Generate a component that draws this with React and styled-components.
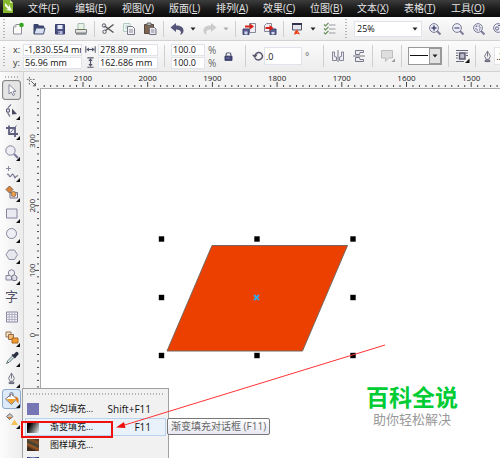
import React, { useState } from "react";
import styled, { createGlobalStyle, css } from "styled-components";

const GlobalStyle = createGlobalStyle`
  * {
    box-sizing: border-box;
  }

  body {
    margin: 0;
    overflow: hidden;
    background: #fff;
  }

  body, button, input, select {
    font-family: "Open Sans", "Noto Sans CJK SC", sans-serif;
    font-size: 9px;
    line-height: 12px;
    color: #111;
  }

  button, input, select {
    margin: 0;
    padding: 0;
    border: 0;
    background: transparent;
    outline: none;
  }
`;

const Window = styled.div`
  position: relative;
  display: flex;
  flex-direction: column;
  height: 100vh;
  overflow: hidden;
`;

const MenuBar = styled.nav`
  display: flex;
  flex: none;
  align-items: center;
  height: 17px;
  padding-left: 3px;
  overflow: hidden;
  background: linear-gradient(#3c3c3c, #1c1c1c 50%, #0a0a0a);
`;

const MenuItem = styled.button`
  flex: 0 0 47px;
  padding-bottom: 2px;
  font-size: 10px;
  line-height: 14px;
  text-align: left;
  white-space: nowrap;
  color: #e6e6e6;
`;

const Logo = styled.svg`
  flex: none;
  width: 11px;
  height: 17px;
  margin-right: 14px;
`;

const Toolbar = styled.div`
  display: flex;
  flex: none;
  align-items: center;
  height: ${(p) => p.$height};
  overflow: hidden;
  border-bottom: 1px solid #d2d2d2;
  background: linear-gradient(#fbfbfb, #ececec);
`;

const Grip = styled.span`
  flex: none;
  width: 2px;
  height: 19px;
  margin: 0 ${(p) => p.$gap || "2px"} 0 ${(p) => p.$before || "3px"};
  background: repeating-linear-gradient(#b4b4b4 0 1px, transparent 1px 3px);
`;

const Separator = styled.span`
  flex: none;
  width: 1px;
  height: 16px;
  margin: 0 ${(p) => p.$after || "2px"} 0 ${(p) => p.$before || "3px"};
  background: #cfcfcf;

  ${(p) =>
    p.$tall &&
    css`
      height: 22px;
    `}
`;

const ToolButton = styled.button`
  display: flex;
  flex: 0 0 ${(p) => p.$width || "21px"};
  align-items: center;
  justify-content: center;
  height: 20px;
`;

const Svg = styled.svg`
  display: block;
  flex: none;
  overflow: visible;
  fill: none;
  stroke: #55566a;
  stroke-width: 1;
`;

const Field = styled.input`
  width: ${(p) => p.$width};
  height: ${(p) => p.$height || "12px"};
  padding-left: 1px;
  border: 1px solid #e0e4ea;
  background: #fff;
`;

const Pair = styled.div`
  display: grid;
  flex: none;
  grid-template-columns: ${(p) => p.$columns};
  align-items: center;
  row-gap: 1px;
`;

const FieldLabel = styled.label`
  display: flex;
  justify-content: center;
  color: #333;
`;

const Unit = styled.span`
  padding-left: 3px;
  font-size: 10px;
  color: #666;
`;

const SelectBox = styled.div`
  position: relative;
  flex: 0 0 ${(p) => p.$width};
  height: ${(p) => p.$height};
  border: 1px solid ${(p) => p.$border || "#e0e4ea"};
  background: #fff;

  select {
    width: 100%;
    height: 100%;
    padding-left: 2px;
    appearance: none;
  }
`;

const SelectArrow = styled.span`
  position: absolute;
  top: 0;
  right: 0;
  bottom: 0;
  display: flex;
  align-items: center;
  justify-content: center;
  width: 12px;
  pointer-events: none;

  ${(p) =>
    p.$boxed &&
    css`
      border: 1px solid #999;
      background: #e2e2e2;
    `}
`;

const LineSample = styled.span`
  position: absolute;
  top: 7px;
  left: 1px;
  right: 13px;
  height: 1px;
  background: #111;
  pointer-events: none;
`;

const Body = styled.div`
  display: flex;
  flex: 1;
  min-height: 0;
`;

const Toolbox = styled.aside`
  position: relative;
  z-index: 2;
  flex: 0 0 24px;
  padding: 4px 2px 0;
  border-right: 1px solid #d4d4d4;
  background: linear-gradient(90deg, #fcfcfc, #ececec);
`;

const ToolboxGrip = styled.div`
  height: 2px;
  margin: 0 3px 2px;
  background: repeating-linear-gradient(90deg, #b4b4b4 0 1px, transparent 1px 3px);
`;

const ToolList = styled.div`
  display: flex;
  flex-direction: column;
  justify-content: space-between;
  height: 350px;
`;

const Tool = styled.button`
  position: relative;
  display: flex;
  align-items: center;
  justify-content: center;
  width: 19px;
  height: 20px;
  border: 1px solid transparent;
  border-radius: 3px;

  ${(p) =>
    p.$active &&
    css`
      border-color: #858585;
      background: #e4e4e4;
      box-shadow: inset 0 0 1px #777;
    `}

  ${(p) =>
    p.$open &&
    css`
      border-color: #8cabcd;
      background: #dceafa;
    `}

  ${(p) =>
    p.$flyout &&
    css`
      &::after {
        content: "";
        position: absolute;
        right: 0;
        bottom: 0;
        border-bottom: 4px solid #111;
        border-left: 4px solid transparent;
      }
    `}
`;

const TextGlyph = styled.span`
  font-size: 13px;
  line-height: 16px;
  color: #55556a;
`;

const Flyout = styled.div`
  position: absolute;
  top: 316px;
  left: 22px;
  width: 147px;
  padding: 4px 2px;
  border: 1px solid #a0a0a0;
  background: #f1f1f1;
`;

const FlyoutGrip = styled.div`
  height: 2px;
  margin: 0 2px 5px;
  background: repeating-linear-gradient(90deg, #b4b4b4 0 1px, transparent 1px 3px);
`;

const FlyoutItem = styled.button`
  display: flex;
  align-items: center;
  width: 100%;
  height: 18px;
  padding: 0 14px 0 1px;
  border: 1px solid ${(p) => (p.$hover ? "#b9d3ee" : "transparent")};
  background: ${(p) => (p.$hover ? "#e9f1fa" : "transparent")};
`;

const Swatch = styled.span`
  width: 12px;
  height: 12px;
  margin-right: 11px;
  background: ${(p) => p.$fill};
`;

const Shortcut = styled.span`
  margin-left: auto;
  font-size: 10px;
`;

const Tooltip = styled.div`
  position: absolute;
  top: 29px;
  left: 144px;
  padding: 1px 3px;
  border: 1px solid #777;
  border-radius: 2px;
  background: linear-gradient(#fff, #e6e7f1);
  font-size: 10px;
  line-height: 13px;
  white-space: nowrap;
  color: #666;
`;

const Workspace = styled.main`
  display: grid;
  flex: 1;
  grid-template-columns: 16px 1fr;
  grid-template-rows: 16px 1fr;
  min-width: 0;
  overflow: hidden;
  background: #f3f3f3;
`;

const Ruler = styled.svg`
  display: block;
  width: 100%;
  height: 100%;
  font-size: 8px;

  text {
    fill: #222;
    text-anchor: middle;
  }

  line {
    stroke: #444;
  }
`;

const Corner = styled.div`
  display: flex;
  align-items: flex-end;
  justify-content: center;
`;

const Canvas = styled.section`
  position: relative;
  min-width: 0;
  overflow: hidden;
  border-top: 1px solid #aaa;
  border-left: 1px solid #aaa;
  background: #fff;
`;

const Drawing = styled.svg`
  display: block;
  width: 100%;
  height: 100%;
`;

const Watermark = styled.div`
  position: absolute;
  right: 42px;
  bottom: 30px;
  font-family: "Liberation Sans", "Noto Sans CJK SC", sans-serif;
  text-align: center;
`;

const WatermarkTitle = styled.div`
  font-size: 23px;
  line-height: 28px;
  font-weight: 700;
  color: #0c3;
`;

const WatermarkText = styled.div`
  font-size: 13px;
  line-height: 16px;
  color: #999;
`;

const Annotation = styled.svg`
  position: absolute;
  inset: 0;
  z-index: 3;
  width: 100%;
  height: 100%;
  pointer-events: none;
`;

const Icon = ({ size = 14, children }) => (
  <Svg width={size} height={size} viewBox="0 0 14 14" aria-hidden="true">
    {children}
  </Svg>
);

const Caret = ({ color = "#222" }) => (
  <Svg width="6" height="4" viewBox="0 0 6 4" aria-hidden="true">
    <path d="M0.5 0.5h5L3 3.5z" fill={color} stroke="none" />
  </Svg>
);

const Lens = ({ children }) => (
  <Icon>
    <path d="M9 9l3.5 3.5" stroke="#7c7c9c" strokeWidth="2" />
    <circle cx="6" cy="6" r="4.4" fill="#ececf6" stroke="#7c7c96" />
    {children}
  </Icon>
);

const icons = {
  create: (
    <Icon>
      <path d="M2.500 5L5 2.500h5.500v9.500h-8z" fill="#fafafa" stroke="#8c8c96" />
      <path d="M2.500 5H5V2.500" stroke="#aaa" />
      <circle cx="10.500" cy="3" r="2.300" fill="#36a421" stroke="none" />
    </Icon>
  ),
  open: (
    <Icon>
      <path d="M2 12V2.500h4l1 1.500h4.500v3" fill="#3b4571" stroke="#38426a" />
      <path d="M2 12l2-6h9l-1.500 6z" fill="#d7e1ef" stroke="#424c72" />
    </Icon>
  ),
  save: (
    <Icon>
      <path d="M2.500 2.500h9v9.500h-9z" fill="#4b5283" stroke="#383f6e" />
      <path d="M4.500 3h5v4h-5z" fill="#e5e9f6" stroke="none" />
      <path d="M5 9h4.500v3H5z" fill="#b8bed8" stroke="none" />
      <path d="M6 9.500v2" stroke="#303668" />
    </Icon>
  ),
  print: (
    <Icon>
      <path d="M4 8V1.500h6V8" fill="#e7f3e8" stroke="#a8bdb0" />
      <path d="M1.500 7.500h11V11h-11z" fill="#e4e5e4" stroke="#7b8078" />
      <path d="M2 12h10.500" stroke="#55586b" />
      <path d="M4 7.500h6" stroke="#65754b" />
    </Icon>
  ),
  cut: (
    <Icon>
      <path d="M12.500 2.500L4.500 8.500M12.500 10.500L3.500 4" stroke="#555" strokeWidth="1.400" />
      <circle cx="3" cy="3.500" r="1.700" />
      <circle cx="3.500" cy="9.800" r="1.700" />
    </Icon>
  ),
  copy: (
    <Icon>
      <path d="M1.500 1.500h6.500v8H1.500z" fill="#edf6f2" stroke="#b5ccc4" />
      <path d="M3 4h4M3 6h4" stroke="#b5ccc4" />
      <path d="M5.500 4.500h5l2 2v6h-7z" fill="#f2f2f5" stroke="#77778a" />
      <path d="M7 8h4M7 10h4" stroke="#8b8b9b" />
    </Icon>
  ),
  paste: (
    <Icon>
      <path d="M1.500 2.500h9v9h-9z" fill="#7d6552" stroke="#54473f" />
      <path d="M4 1h4v2.500H4z" fill="#bcbcb0" stroke="#666" />
      <path d="M6.500 5.500h5l1.500 1.500v5.500H6.500z" fill="#ececf0" stroke="#70707d" />
      <path d="M8 8h3.500M8 10h3.500" stroke="#858592" />
    </Icon>
  ),
  undo: (
    <Icon>
      <path d="M.5 5.500L6 1v2.500c4.500 0 7.500 1.500 7.500 5 0 2-1 3.500-3.500 4.500.8-1.200 1.200-2 .8-3.200C10.100 8.300 8.500 7.500 6 7.500V10z" fill="#55557a" stroke="none" />
    </Icon>
  ),
  redo: (
    <Icon>
      <path d="M13.500 5.500L8 1v2.500C3.500 3.500.5 5 .5 8.500c0 2 1 3.500 3.500 4.500-.8-1.200-1.200-2-.8-3.200C3.900 8.300 5.500 7.500 8 7.500V10z" fill="#cbcbcb" stroke="none" />
    </Icon>
  ),
  load: (
    <Icon>
      <path d="M7.500 1.500h6v9h-6z" fill="#ededf3" stroke="#888899" />
      <path d="M1 7h6v5.500H1z" fill="#5c6294" stroke="#3c416c" />
      <path d="M2.500 9.500h3v3h-3z" fill="#d3d8eb" stroke="none" />
      <path d="M3 3.500h5v-2l4 3-4 3v-2H3z" fill="#d92217" stroke="none" />
    </Icon>
  ),
  send: (
    <Icon>
      <path d="M1.500 3.500l2-2h5v8h-7z" fill="#ededf3" stroke="#888899" />
      <path d="M7 7h6v5.500H7z" fill="#5c6294" stroke="#3c416c" />
      <path d="M8.500 10h3v2.500h-3z" fill="#d3d8eb" stroke="none" />
      <path d="M2.500 5h4V3l4 3-4 3V7h-4z" fill="#d92217" stroke="none" />
    </Icon>
  ),
  launch: (
    <Icon>
      <path d="M2.500 1.500h9v6.500h-9z" fill="#e5e6ed" stroke="#535361" />
      <path d="M2 2h10" stroke="#313149" strokeWidth="2" />
      <path d="M7 7.500l3 5-3-.8-3 1 .8-3z" fill="#ee3d1d" stroke="none" />
      <path d="M7 9.500l1.300 2L7 11z" fill="#ffb13a" stroke="none" />
    </Icon>
  ),
  options: (
    <Icon>
      <path d="M6 3h6.500M6 7h6.500M6 11h6.500" stroke="#9c9ca4" strokeWidth="1.200" />
      <path d="M1 2.500l1.500 1.500L5.500.8M1 6.500L2.500 8l3-3.200M1 10.500L2.500 12l3-3.200" stroke="#649157" strokeWidth="1.200" />
    </Icon>
  ),
  zoomIn: (
    <Lens>
      <path d="M6 3.500v5M3.500 6h5" stroke="#4b4b79" strokeWidth="1.600" />
    </Lens>
  ),
  zoomOut: (
    <Lens>
      <path d="M3.500 6h5" stroke="#77779b" strokeWidth="1.600" />
    </Lens>
  ),
  zoomSelected: (
    <Lens>
      <path d="M4 4h4v4H4z" stroke="#66668b" strokeDasharray="1.500 1" />
    </Lens>
  ),
  zoomAll: (
    <Lens>
      <circle cx="5" cy="6.500" r="1.600" stroke="#66668b" />
      <path d="M6 3.500h2.500V6" stroke="#66668b" />
    </Lens>
  ),
  hSize: (
    <Icon size={11}>
      <path d="M1 3v8M13 3v8" strokeWidth="1.300" />
      <path d="M3 7h8" strokeWidth="1.500" />
      <path d="M1.500 7L5 4.300v5.400zM12.500 7L9 4.300v5.400z" fill="#55566a" stroke="none" />
    </Icon>
  ),
  vSize: (
    <Icon size={11}>
      <path d="M3 1h8M3 13h8" strokeWidth="1.500" />
      <path d="M7 3v8" strokeWidth="1.500" />
      <path d="M7 1.500L4.300 5h5.400zM7 12.500L4.300 9h5.400z" fill="#55566a" stroke="none" />
    </Icon>
  ),
  lock: (
    <Icon size={11}>
      <path d="M4 6V4.500C4 1.500 10 1.500 10 4.500V6" stroke="#55577c" strokeWidth="1.500" />
      <path d="M2.500 6.500h9v5.500h-9z" fill="#3f4275" stroke="#33365f" />
      <path d="M4 9h5" stroke="#8d90b5" />
    </Icon>
  ),
  rotate: (
    <Icon size={12}>
      <path d="M3.500 9.500C8 14.500 14 9 11.500 5 9.500 1.500 4.500 2.500 3.500 7" stroke="#55556e" strokeWidth="1.700" />
      <path d="M0 5.500h6.500L3.300 9.500z" fill="#55556e" stroke="none" />
    </Icon>
  ),
  mirrorH: (
    <Icon>
      <path d="M1.500 3v8.500h4V8L3.500 7.500V3zM12.500 3v8.500h-4V8l2-.5V3z" fill="#ededf1" stroke="#858597" />
      <path d="M7 1v12" stroke="#77778b" />
    </Icon>
  ),
  mirrorV: (
    <Icon>
      <path d="M11.500 1.500H3.500v4h4l.5-2h3.500zM11.500 12.500H3.500v-4h4l.5 2h3.500z" fill="#ededf1" stroke="#77778a" />
      <path d="M1 7h12" stroke="#77778b" />
    </Icon>
  ),
  callout: (
    <Icon>
      <path d="M1.500 1.500h11v7.500h-4l-3 3.500V9h-4z" fill="#dedede" stroke="#bdbdbd" />
      <path d="M15 9.500V13h-3.500z" fill="#999" stroke="none" />
    </Icon>
  ),
  wrap: (
    <Icon>
      <path d="M1 1.500h12M1 12.500h8M1 4h2M1 6.500h2M1 9h2M11 4h2M11 6.500h2" stroke="#66667a" />
      <path d="M4.500 4h5.500v6H4.500z" fill="#b9b9c9" stroke="#55556d" strokeWidth="1.400" />
      <path d="M14.500 9.500V14H10z" fill="#111" stroke="none" />
    </Icon>
  ),
  nib: (
    <Icon size={13}>
      <path d="M7 1c.5 2 3 4 3 6l-1.500 3h-3L4 7c0-2 2.500-4 3-6z" fill="#eee" stroke="#6f6f80" />
      <path d="M7 2v5" stroke="#6f6f80" />
      <path d="M4.500 11h5v1.500h-5z" fill="#bbb" stroke="#55556a" />
    </Icon>
  ),
  pick: (
    <Icon>
      <path d="M4 1.500v9.500l2.300-2 1.700 3.500 1.700-.8L8 8.300h3z" fill="#fff" stroke="#85859d" />
    </Icon>
  ),
  shape: (
    <Icon>
      <path d="M6 .5C1.500 4 1.500 8.500 5 12.500" stroke="#777790" strokeWidth="1.200" />
      <path d="M1.500 5h3v3h-3z" fill="#dedee8" stroke="#666680" />
      <path d="M7 4.500l5 5.500-5 .5z" fill="#4a4a60" stroke="none" />
    </Icon>
  ),
  crop: (
    <Icon>
      <path d="M4 1.500v8.500h9M1 4h9v9" stroke="#5f5f80" strokeWidth="1.800" />
      <path d="M5.500 8.500l6-7" stroke="#66668a" />
    </Icon>
  ),
  zoom: (
    <Icon>
      <path d="M9 9l4 4" stroke="#7777a0" strokeWidth="2" />
      <circle cx="5.500" cy="5.500" r="4.700" fill="#ededf3" stroke="#858599" />
    </Icon>
  ),
  freehand: (
    <Icon>
      <path d="M3.500 0v5M1 2.500h5" stroke="#8a8aa0" />
      <path d="M2 8.500c2-2 2 3 3.500 2s1.500-4 3-1.500 1 4 2.500 1.500l2-1" stroke="#777791" strokeWidth="1.200" />
    </Icon>
  ),
  smartFill: (
    <Icon>
      <path d="M1 3.500L4.500 0 8 3.500 4.500 7z" fill="#d9843a" stroke="#81644f" />
      <path d="M5 6.500h7.500V12H5z" fill="#ececf1" stroke="#70708a" />
      <circle cx="8.500" cy="8" r="2.500" fill="#eba04f" stroke="#927052" />
    </Icon>
  ),
  rect: (
    <Icon>
      <path d="M1.500 2h10.500v9H1.500z" fill="#eaeaf3" stroke="#85859e" />
    </Icon>
  ),
  ellipse: (
    <Icon>
      <circle cx="6.500" cy="6.500" r="5" fill="#eeeef5" stroke="#85859e" />
    </Icon>
  ),
  polygon: (
    <Icon>
      <path d="M4 2h5.500l3 4.700-3 4.800H4L1 6.700z" fill="#e6e6ed" stroke="#8f8fa1" />
    </Icon>
  ),
  shapes: (
    <Icon>
      <path d="M1 6.500h5.500V11H1z" fill="#e6e6ed" stroke="#858599" />
      <circle cx="6.500" cy="4" r="3.200" fill="#eeeef5" stroke="#858599" />
      <path d="M6.500 8l2.700-2.500 3 2.500-1 3.500H7.500z" fill="#dedee8" stroke="#77778e" />
    </Icon>
  ),
  table: (
    <Icon>
      <path d="M1.500 2h11v10h-11z" fill="#f6f6fb" stroke="#85859e" />
      <path d="M4.200 2v10M7 2v10M9.800 2v10M1.500 4.500h11M1.500 7h11M1.500 9.500h11" stroke="#b0b0c3" />
    </Icon>
  ),
  blend: (
    <Icon>
      <path d="M1 1h5v5H1z" fill="#f7e6cb" stroke="#956f50" />
      <path d="M3.500 3.500h5v5h-5z" fill="#f4bd75" stroke="#956f50" />
      <path d="M7 7h6v5H7z" fill="#f29b31" stroke="#aa661e" />
    </Icon>
  ),
  eyedropper: (
    <Icon>
      <path d="M1.500 12.500L3 9.500l5-5 1.500 1.500-5 5z" fill="#d9eded" stroke="#617174" />
      <path d="M7 3.500l3.500 3.500M8.500 4.500L11 2c1-1 2.500.5 1.500 1.500L10 6z" fill="#2b3043" stroke="#2b3043" strokeWidth="1.500" />
    </Icon>
  ),
  fill: (
    <Icon>
      <path d="M.5 7l6-5 5 5-5 5.500z" fill="#fff" stroke="#77737a" />
      <path d="M1.500 7H11l-4.500 5z" fill="#f0a02c" stroke="none" />
      <path d="M5 5V2c0-2 3-2 3 0v2" stroke="#66667a" />
      <path d="M9.500 4.500c3.500 0 4.500 2 4 7-1.500-1-2.500-3-2.500-5z" fill="#e47817" stroke="none" />
    </Icon>
  ),
  interactiveFill: (
    <Icon>
      <path d="M1.500 3.500L5 .5l3 3-3.500 3z" fill="#c9c3b9" stroke="#70707c" />
      <path d="M3 4h4L4.500 6z" fill="#d77c23" stroke="none" />
      <path d="M9.500 6.500l3.500 5.500H6z" fill="#f4c157" stroke="none" />
    </Icon>
  ),
};

const menus = [
  ["文件", "F"],
  ["编辑", "E"],
  ["视图", "V"],
  ["版面", "L"],
  ["排列", "A"],
  ["效果", "C"],
  ["位图", "B"],
  ["文本", "X"],
  ["表格", "T"],
  ["工具", "O"],
];

const tools = [
  { id: "pick", label: "挑选" },
  { id: "shape", label: "形状", flyout: true },
  { id: "crop", label: "裁剪", flyout: true },
  { id: "zoom", label: "缩放", flyout: true },
  { id: "freehand", label: "手绘", flyout: true },
  { id: "smartFill", label: "智能填充", flyout: true },
  { id: "rect", label: "矩形", flyout: true },
  { id: "ellipse", label: "椭圆形", flyout: true },
  { id: "polygon", label: "多边形", flyout: true },
  { id: "shapes", label: "基本形状", flyout: true },
  { id: "text", label: "文本" },
  { id: "table", label: "表格" },
  { id: "blend", label: "调和", flyout: true },
  { id: "eyedropper", label: "滴管", flyout: true },
  { id: "nib", label: "轮廓", flyout: true },
  { id: "fill", label: "填充", flyout: true },
  { id: "interactiveFill", label: "交互式填充", flyout: true },
];

const fills = [
  { id: "uniform", label: "均匀填充...", shortcut: "Shift+F11", fill: "#7676b5" },
  {
    id: "fountain",
    label: "渐变填充...",
    shortcut: "F11",
    fill: "linear-gradient(120deg, #000 25%, #eee)",
  },
  {
    id: "pattern",
    label: "图样填充...",
    fill: "linear-gradient(25deg, #3b2a1d 20%, #a05a24 40%, #3a3d35 55%, #8a5126 75%, #3b2c20)",
  },
  { id: "texture", fill: "linear-gradient(90deg, #223066, #7d8fc0 50%, #223066)" },
];

// 100 mm on the ruler
const STEP = 64.7;

const range = (n) => Array.from({ length: Math.max(0, n) }, (_, i) => i);

// the 2100 mark is 43px from the left end
const HorizontalRuler = () => {
  const marks = Math.floor((window.innerWidth - 93) / STEP) + 1;
  return (
    <Ruler>
      {range(marks * 10 + 10).map((i) => {
        const x = 43 + ((i - 6) * STEP) / 10;
        const major = (i - 6) % 10 === 0;
        return <line key={i} x1={x} x2={x} y1={major ? 10 : 13} y2="15" />;
      })}
      {range(marks).map((i) => (
        <text key={i} x={43 + i * STEP} y="9">
          {2100 - i * 100}
        </text>
      ))}
    </Ruler>
  );
};

// the 300 mark is 53px from the top end
const VerticalRuler = () => {
  const marks = Math.floor((window.innerHeight - 200) / STEP) + 1;
  return (
    <Ruler>
      {range(marks * 10 + 20).map((i) => {
        const y = 53 + ((i - 8) * STEP) / 10;
        const major = (i - 8) % 10 === 0;
        return <line key={i} y1={y} y2={y} x1={major ? 11 : 13} x2="15" />;
      })}
      {range(marks).map((i) => {
        const y = 53 + i * STEP;
        return (
          <text key={i} x="11" y={y} transform={`rotate(-90 11 ${y})`}>
            {Math.abs(300 - i * 100)}
          </text>
        );
      })}
    </Ruler>
  );
};

const handles = [
  [120.5, 150],
  [216, 150],
  [312, 150],
  [120.5, 208.5],
  [312, 208.5],
  [120.5, 266.5],
  [216, 266.5],
  [312, 266.5],
];

const Artwork = () => (
  <Drawing>
    <path d="M171 156.500H306.500L261.500 262H126z" fill="#ec4000" stroke="#77675f" />
    {handles.map(([x, y]) => (
      <rect key={`${x}-${y}`} x={x - 2.7} y={y - 2.7} width="5.4" height="5.4" />
    ))}
    <path d="M213 206l5 5M218 206l-5 5" stroke="#35a9e8" strokeWidth="1.800" />
  </Drawing>
);

const IconButton = ({ name, label, width }) => (
  <ToolButton $width={width} aria-label={label}>
    {icons[name]}
  </ToolButton>
);

const App = () => {
  const [active, setActive] = useState("pick");

  return (
    <Window>
      <GlobalStyle />
      <MenuBar>
        <Logo viewBox="0 0 11 17" aria-hidden="true">
          <path d="M0 0h7l3 3v10H0z" fill="#86b82f" />
          <path d="M7 0v3h3z" fill="#d9eca9" />
          <path d="M2 3l4 4V4l3 7-6-1 2-1-3-3z" fill="#f6faea" />
        </Logo>
        {menus.map(([name, key]) => (
          <MenuItem key={key}>
            {name}(<u>{key}</u>)
          </MenuItem>
        ))}
      </MenuBar>

      <Toolbar $height="24px">
        <Grip />
        <IconButton name="create" label="新建" />
        <IconButton name="open" label="打开" />
        <IconButton name="save" label="保存" />
        <IconButton name="print" label="打印" />
        <Separator />
        <IconButton name="cut" label="剪切" />
        <IconButton name="copy" label="复制" />
        <IconButton name="paste" label="粘贴" />
        <Separator />
        <IconButton name="undo" label="撤消" />
        <ToolButton $width="12px" aria-label="撤消列表">
          <Caret />
        </ToolButton>
        <IconButton name="redo" label="重做" />
        <ToolButton $width="12px" aria-label="重做列表">
          <Caret color="#aaa" />
        </ToolButton>
        <Separator />
        <IconButton name="load" label="导入" />
        <IconButton name="send" label="导出" />
        <Separator />
        <IconButton name="launch" label="应用程序启动器" />
        <ToolButton $width="12px" aria-label="应用程序列表">
          <Caret />
        </ToolButton>
        <IconButton name="options" label="选项" />
        <Grip $before="5px" $gap="7px" />
        <SelectBox $width="68px" $height="16px">
          <select aria-label="缩放级别" defaultValue="25%">
            <option>25%</option>
            <option>50%</option>
            <option>100%</option>
          </select>
          <SelectArrow>
            <Caret />
          </SelectArrow>
        </SelectBox>
        <IconButton name="zoomIn" label="放大" width="26px" />
        <IconButton name="zoomOut" label="缩小" width="20px" />
        <IconButton name="zoomSelected" label="缩放选定对象" />
        <IconButton name="zoomAll" label="缩放全部对象" width="20px" />
      </Toolbar>

      <Toolbar $height="31px">
        <Grip $gap="5px" />
        <Pair $columns="13px 59px 16px 60px">
          <FieldLabel htmlFor="pos-x">x:</FieldLabel>
          <Field id="pos-x" $width="59px" defaultValue="-1,830.554 mm" />
          <FieldLabel htmlFor="obj-w" aria-label="宽度">
            {icons.hSize}
          </FieldLabel>
          <Field id="obj-w" $width="60px" defaultValue="278.89 mm" />
          <FieldLabel htmlFor="pos-y">y:</FieldLabel>
          <Field id="pos-y" $width="59px" defaultValue="56.96 mm" />
          <FieldLabel htmlFor="obj-h" aria-label="高度">
            {icons.vSize}
          </FieldLabel>
          <Field id="obj-h" $width="60px" defaultValue="162.686 mm" />
        </Pair>
        <Separator $tall $before="6px" $after="6px" />
        <Pair $columns="34px 13px">
          <Field $width="34px" aria-label="水平缩放" defaultValue="100.0" />
          <Unit>%</Unit>
          <Field $width="34px" aria-label="垂直缩放" defaultValue="100.0" />
          <Unit>%</Unit>
        </Pair>
        <IconButton name="lock" label="锁定比率" />
        <Separator $tall $before="6px" $after="6px" />
        <FieldLabel htmlFor="angle" aria-label="旋转角度">
          {icons.rotate}
        </FieldLabel>
        <Field id="angle" $width="38px" $height="18px" defaultValue=".0" />
        <Unit>°</Unit>
        <Separator $tall $before="14px" $after="3px" />
        <IconButton name="mirrorH" label="水平镜像" />
        <IconButton name="mirrorV" label="垂直镜像" />
        <Separator $tall />
        <IconButton name="callout" label="标注" width="24px" />
        <Separator $tall $before="2px" $after="6px" />
        <SelectBox $width="34px" $height="18px" $border="#999">
          <select aria-label="线条样式">
            <option aria-label="实线" />
          </select>
          <LineSample />
          <SelectArrow $boxed>
            <Caret />
          </SelectArrow>
        </SelectBox>
        <Separator $tall $before="6px" />
        <IconButton name="wrap" label="段落文本换行" />
        <Separator $tall $after="5px" />
        <FieldLabel htmlFor="outline" aria-label="轮廓宽度">
          {icons.nib}
        </FieldLabel>
        <Field id="outline" $width="60px" $height="18px" defaultValue=".2 mm" />
      </Toolbar>

      <Body>
        <Toolbox>
          <ToolboxGrip />
          <ToolList>
            {tools.map(({ id, label, flyout }) => (
              <Tool
                key={id}
                aria-label={label}
                $active={active === id}
                $open={id === "fill"}
                $flyout={flyout}
                onClick={() => setActive(id)}
              >
                {id === "text" ? <TextGlyph>字</TextGlyph> : icons[id]}
              </Tool>
            ))}
          </ToolList>
          <Flyout>
            <FlyoutGrip />
            {fills.map(({ id, label, shortcut, fill }) => (
              <FlyoutItem key={id} $hover={id === "fountain"}>
                <Swatch $fill={fill} />
                {label}
                {shortcut && <Shortcut>{shortcut}</Shortcut>}
              </FlyoutItem>
            ))}
            <Tooltip role="tooltip">渐变填充对话框 (F11)</Tooltip>
          </Flyout>
        </Toolbox>

        <Workspace>
          <Corner>
            <Icon size={12}>
              <path d="M1 4h9M4 1v10" stroke="#555" strokeDasharray="2 1.500" />
              <path d="M6 6l5 5M11 8v3.500H8" stroke="#444" />
            </Icon>
          </Corner>
          <HorizontalRuler />
          <VerticalRuler />
          <Canvas>
            <Artwork />
            <Watermark>
              <WatermarkTitle>百科全说</WatermarkTitle>
              <WatermarkText>助你轻松解决</WatermarkText>
            </Watermark>
          </Canvas>
        </Workspace>
      </Body>

      <Annotation aria-hidden="true">
        <rect x="22" y="422" width="90" height="15" fill="none" stroke="#f01010" strokeWidth="2" />
        <path d="M385 345L123 425.500" stroke="#f33" fill="none" />
        <path d="M116 427.500l8-5.500 1.500 6z" fill="#f01010" />
      </Annotation>
    </Window>
  );
};

export default App;
